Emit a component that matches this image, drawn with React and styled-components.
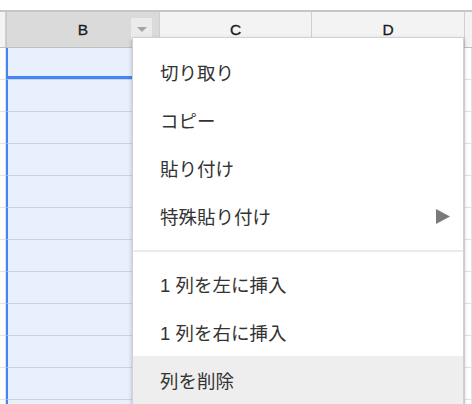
import React from "react";
import styled, { createGlobalStyle } from "styled-components";

const GlobalStyle = createGlobalStyle`
  html, body {
    margin: 0;
    padding: 0;
    background: #fff;
    overflow: hidden;
  }
`;

const columns = [
  { key: "A", label: "" },
  { key: "B", label: "B", selected: true },
  { key: "C", label: "C" },
  { key: "D", label: "D" },
  { key: "E", label: "" },
];

const menuItems = [
  { label: "切り取り" },
  { label: "コピー" },
  { label: "貼り付け" },
  { label: "特殊貼り付け", submenu: true },
  { divider: true },
  { label: "1 列を左に挿入" },
  { label: "1 列を右に挿入" },
  { label: "列を削除", hover: true },
];

const rowCount = 12;

const App = () => {
  return (
    <>
      <GlobalStyle />
      <Sheet>
        <Header>
          {columns.map((col) => (
            <HeadCell key={col.key} selected={col.selected}>
              {col.label}
              {col.selected && (
                <DropButton>
                  <svg width="10" height="6" viewBox="0 0 10 6">
                    <path d="M0 0 L10 0 L5 5 Z" fill="#a3a3a3" />
                  </svg>
                </DropButton>
              )}
            </HeadCell>
          ))}
        </Header>
        {Array.from({ length: rowCount }).map((_, r) => (
          <Row key={r}>
            {columns.map((col) => (
              <Cell key={col.key} selected={col.selected} active={col.selected && r === 0} />
            ))}
          </Row>
        ))}

        <Menu>
          {menuItems.map((item, i) =>
            item.divider ? (
              <Divider key={i} />
            ) : (
              <Item key={i} hover={item.hover}>
                <span>{item.label}</span>
                {item.submenu && (
                  <svg width="14" height="15" viewBox="0 0 14 15">
                    <path d="M0 0 L14 7.5 L0 15 Z" fill="#7a7a7a" />
                  </svg>
                )}
              </Item>
            )
          )}
        </Menu>
      </Sheet>
    </>
  );
};

const Sheet = styled.div`
  position: relative;
  width: 472px;
  height: 404px;
  overflow: hidden;
  padding-top: 10px;
  box-sizing: border-box;
`;

const Header = styled.div`
  display: grid;
  grid-template-columns: 6px 154px 152px 153px 1fr;
  height: 35px;
  border-top: 2px solid #c6c6c6;
  border-bottom: 1px solid #c0c0c0;
`;

const HeadCell = styled.div`
  position: relative;
  display: flex;
  align-items: center;
  justify-content: center;
  background: ${(props) => (props.selected ? "#dadada" : "#f3f3f3")};
  border-right: 1px solid #cfcfcf;
  border-left: ${(props) => (props.selected ? "1px solid #c8c8c8" : "none")};
  font-family: "Liberation Sans", Arial, sans-serif;
  font-size: 15.5px;
  color: #1a1a1a;
  -webkit-text-stroke: 0.3px #1a1a1a;
  padding-top: 1px;
  box-sizing: border-box;
  &:last-child {
    border-right: none;
  }
`;

const DropButton = styled.div`
  position: absolute;
  right: 7px;
  top: 6px;
  width: 21px;
  height: 22px;
  background: #ebebeb;
  display: flex;
  align-items: center;
  justify-content: center;
  padding-top: 2px;
  box-sizing: border-box;
`;

const Row = styled.div`
  display: grid;
  grid-template-columns: 6px 154px 152px 153px 1fr;
  height: 32px;
`;

const Cell = styled.div`
  background: ${(props) => (props.selected ? "#e8f0fe" : "#fff")};
  border-bottom: 1px solid ${(props) => (props.selected ? "#c9d2de" : "#e2e2e2")};
  border-left: ${(props) => (props.selected ? "2px solid #4285f4" : "none")};
  border-right: 1px solid #e2e2e2;
  box-shadow: ${(props) => (props.active ? "inset 0 -3px 0 #4285f4" : "none")};
  box-sizing: border-box;
`;

const Menu = styled.div`
  position: absolute;
  left: 132px;
  top: 37px;
  width: 332px;
  background: #fff;
  border: 1px solid rgba(0, 0, 0, 0.18);
  box-shadow: 0 2px 4px rgba(0, 0, 0, 0.25);
  padding: 10px 0 20px;
  box-sizing: border-box;
`;

const Item = styled.div`
  display: flex;
  align-items: center;
  justify-content: space-between;
  height: 48px;
  padding: 0 13px 0 27px;
  background: ${(props) => (props.hover ? "#eeeeee" : "transparent")};
  font-family: "Liberation Sans", "Noto Sans CJK JP", sans-serif;
  font-size: 18.5px;
  color: #333;
`;

const Divider = styled.div`
  height: 2px;
  background: #ebebeb;
  margin: 10px 0 8px;
`;

export default App;
